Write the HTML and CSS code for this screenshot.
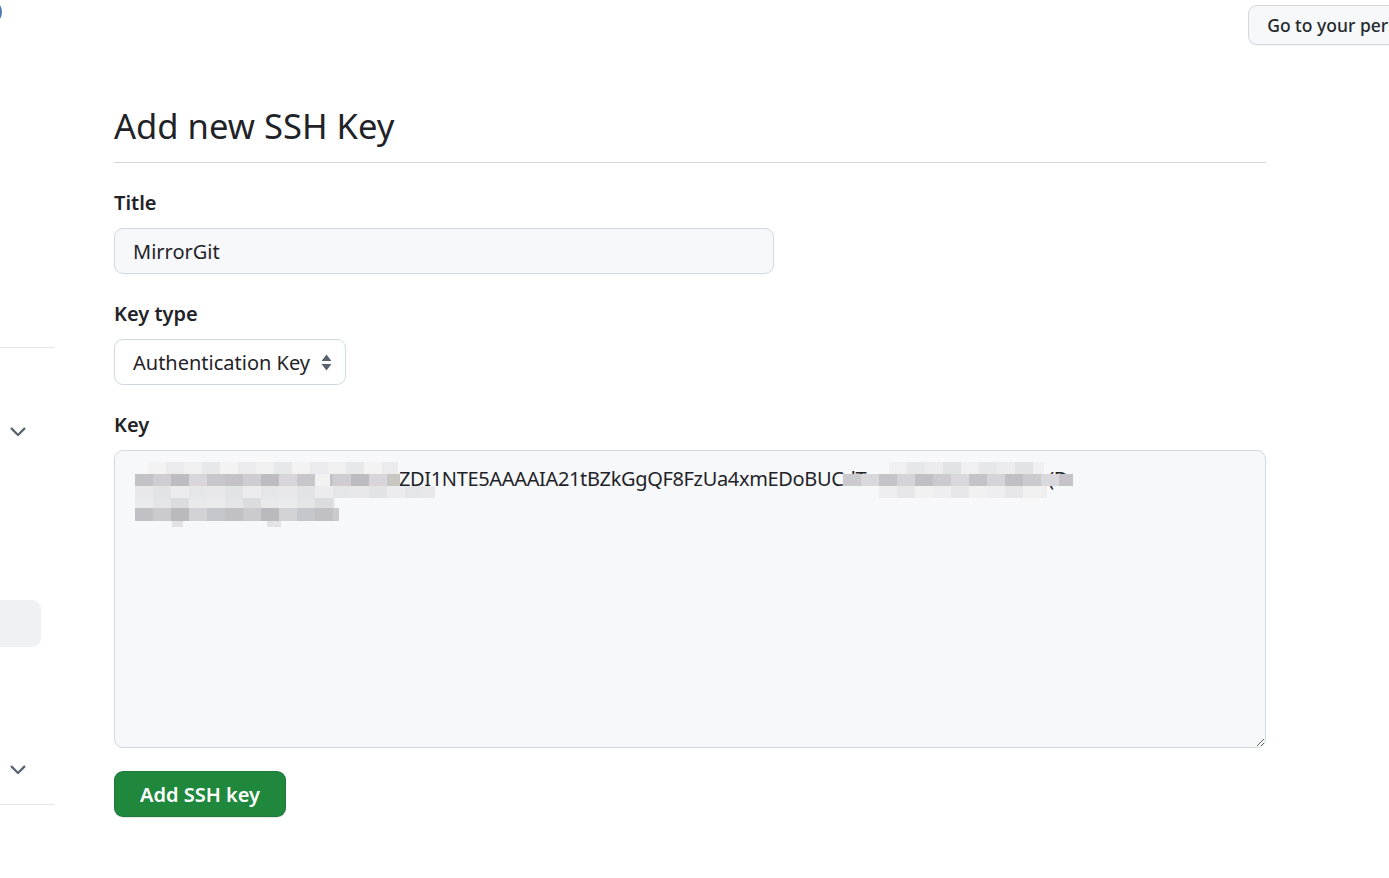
FILE: index.html
```html
<!DOCTYPE html>
<html lang="en">
<head>
<meta charset="utf-8">
<title>Add new SSH Key</title>
<link rel="stylesheet" href="styles.css">
</head>
<body>
<div class="page">
  <aside class="sidebar">
    <div class="avatar-row"><span class="avatar"></span></div>
    <div class="side-rule side-rule-1"></div>
    <div class="nav-row nav-row-1">
      <svg class="chev" viewBox="0 0 16 16" width="24" height="24"><path d="M12.78 5.22a.749.749 0 0 1 0 1.060l-4.25 4.25a.749.749 0 0 1-1.06 0L3.22 6.28a.749.749 0 1 1 1.06-1.06L8 8.939l3.72-3.719a.749.749 0 0 1 1.06 0Z"/></svg>
    </div>
    <div class="nav-selected"></div>
    <div class="nav-row nav-row-2">
      <svg class="chev" viewBox="0 0 16 16" width="24" height="24"><path d="M12.78 5.22a.749.749 0 0 1 0 1.060l-4.25 4.25a.749.749 0 0 1-1.06 0L3.22 6.28a.749.749 0 1 1 1.06-1.06L8 8.939l3.72-3.719a.749.749 0 0 1 1.06 0Z"/></svg>
    </div>
    <div class="side-rule side-rule-2"></div>
  </aside>

  <div class="content">
    <header class="topbar">
      <button class="btn-profile">Go to your personal profile</button>
    </header>

    <main class="main">
      <h1 class="subhead">Add new SSH Key</h1>

      <form class="form">
        <div class="group">
          <label class="label" for="title">Title</label>
          <input class="input" id="title" type="text" value="MirrorGit">
        </div>

        <div class="group">
          <label class="label">Key type</label>
          <div class="select">
            <span>Authentication Key</span>
            <svg class="select-arrow" viewBox="0 0 11 17" width="11" height="17"><path d="M5.5 0.5L10.5 7H0.5Z M5.5 16.5L10.5 10H0.5Z"/></svg>
          </div>
        </div>

        <div class="group">
          <label class="label">Key</label>
          <div class="textarea">
            <div class="key-line"><span class="gap gap-a"></span>ZDI1NTE5AAAAIA21tBZkGgQF8FzUa4xmEDoBUCdT<span class="gap gap-b"></span>(D</div>
            <div class="key-line"><span class="gap gap-c"></span></div>
            <div class="mosaic mosaic-a">
              <div class="mr mr-a0"></div>
              <div class="mr mr-a1"></div>
              <div class="mr mr-a2"></div>
              <div class="mr mr-a3"></div>
              <div class="mr mr-a4"></div>
              <div class="mr mr-a5"></div>
            </div>
            <div class="mosaic mosaic-b">
              <div class="mr mr-b0"></div>
              <div class="mr mr-b1"></div>
              <div class="mr mr-b2"></div>
            </div>
          </div>
        </div>

        <button class="btn-primary" type="button">Add SSH key</button>
      </form>
    </main>
  </div>
</div>
</body>
</html>
```

FILE: styles.css
```css
* { box-sizing: border-box; }

html, body {
  margin: 0;
  padding: 0;
  background: #ffffff;
  overflow: hidden;
  height: 100%;
}

body {
  font-family: "Noto Sans", "Liberation Sans", sans-serif;
  color: #1f2328;
}

.page {
  display: flex;
  width: 1389px;
  height: 878px;
  overflow: hidden;
}

/* ---------- sidebar ---------- */
.sidebar {
  width: 54px;
  flex: none;
  display: flex;
  flex-direction: column;
}

.avatar-row {
  height: 24px;
  overflow: hidden;
}

.avatar {
  display: block;
  width: 26px;
  height: 26px;
  margin-left: -24px;
  margin-top: -1px;
  border-radius: 50%;
  border: 2px solid #4f79b0;
}

.side-rule {
  height: 1px;
  background: #e1e4e8;
}

.side-rule-1 { margin-top: 323px; }
.side-rule-2 { margin-top: 10px; }

.nav-row {
  height: 48px;
  display: flex;
  align-items: center;
  padding-left: 6px;
}

.nav-row-1 { margin-top: 60px; }
.nav-row-2 { margin-top: 99px; }

.chev { fill: #59636e; }

.nav-selected {
  margin-top: 144px;
  width: 41px;
  height: 47px;
  border-radius: 0 9px 9px 0;
  background: #eff1f3;
}

/* ---------- content ---------- */
.content {
  flex: 1;
  display: flex;
  flex-direction: column;
  min-width: 0;
}

.topbar {
  height: 49px;
  display: flex;
  justify-content: flex-end;
  align-items: flex-start;
}

.btn-profile {
  margin-top: 5px;
  margin-right: -122px;
  height: 40px;
  padding: 0 18px;
  border: 1px solid #d1d9e0;
  border-radius: 9px;
  background: #f6f8fa;
  font-family: "Noto Sans", "Liberation Sans", sans-serif;
  font-size: 17.5px;
  font-weight: 500;
  color: #25292e;
  white-space: nowrap;
  box-shadow: 0 1px 0 rgba(31, 35, 40, 0.04);
}

.main {
  margin-left: 60px;
  width: 1152px;
}

.subhead {
  margin: 51px 0 0;
  padding-bottom: 11px;
  border-bottom: 1px solid #d1d9e0;
  font-size: 34.6px;
  line-height: 51px;
  font-weight: 400;
  color: #1f2328;
}

.form {
  display: flex;
  flex-direction: column;
  align-items: flex-start;
  padding-top: 25px;
}

.group {
  display: flex;
  flex-direction: column;
  align-items: flex-start;
  width: 100%;
  margin-bottom: 25px;
}

.group:last-of-type { margin-bottom: 23px; }

.label {
  display: block;
  font-size: 20px;
  line-height: 30px;
  font-weight: 600;
  margin-bottom: 10px;
  color: #1f2328;
}

.input {
  width: 660px;
  height: 46px;
  padding: 0 18px;
  border: 1px solid #d1d9e0;
  border-radius: 9px;
  background: #f6f8fa;
  font-family: "Noto Sans", "Liberation Sans", sans-serif;
  font-size: 20px;
  color: #1f2328;
  outline: none;
}

.select {
  width: 232px;
  height: 46px;
  padding: 0 13px 0 18px;
  border: 1px solid #d1d9e0;
  border-radius: 9px;
  background: #ffffff;
  display: flex;
  align-items: center;
  justify-content: space-between;
  font-size: 20px;
  color: #1f2328;
}

.select-arrow { fill: #59636e; }

.textarea {
  position: relative;
  width: 1152px;
  height: 298px;
  padding: 12px 19px;
  border: 1px solid #d1d9e0;
  border-radius: 9px;
  background: #f6f8fa;
  font-size: 20px;
  line-height: 32px;
  color: #1f2328;
  resize: vertical;
  overflow: hidden;
  white-space: nowrap;
}

.key-line {
  height: 32px;
  letter-spacing: -0.35px;
}

.gap { display: inline-block; height: 10px; }
.gap-a { width: 265px; }
.gap-b { width: 182px; }
.gap-c { width: 204px; }

/* redaction mosaic laid over the key text */
.mosaic {
  position: absolute;
  display: flex;
  flex-direction: column;
}

.mosaic-a { left: 20px; top: 11px; width: 300px; }
.mosaic-b { left: 728px; top: 11px; width: 232px; }

.mr { height: 12px; }

.mr-a0 {
  margin-left: 13px;
  width: 250px;
  background: repeating-linear-gradient(90deg, #f3f3f4 0 18px, #ebebed 18px 36px, #f0f0f1 36px 54px, #e7e8ea 54px 72px);
}
.mr-a1 {
  width: 265px;
  background:
    linear-gradient(90deg, transparent 0 180px, #f2f2f3 180px 195px, transparent 195px 253px, #c9c7c1 253px 265px),
    repeating-linear-gradient(90deg, #c3c2c7 0 18px, #cfcdd1 18px 36px, #bdbcc1 36px 54px, #d8d6da 54px 72px, #c7c6cb 72px 90px);
}
.mr-a2 {
  width: 300px;
  background: repeating-linear-gradient(90deg, #e8e8ea 0 18px, #e2e3e5 18px 36px, #ececee 36px 54px, #e5e6e8 54px 72px);
}
.mr-a3 {
  width: 200px;
  height: 10px;
  background: repeating-linear-gradient(90deg, #eaebed 0 18px, #e3e5e7 18px 36px, #dadcdf 36px 54px, #e8e9eb 54px 72px);
}
.mr-a4 {
  width: 204px;
  height: 13px;
  background: repeating-linear-gradient(90deg, #c1c0c5 0 18px, #cbcacf 18px 36px, #b9b9be 36px 54px, #d2d1d5 54px 72px, #c6c7cc 72px 90px);
}
.mr-a5 {
  width: 150px;
  height: 6px;
  background: linear-gradient(90deg, transparent 0 37px, #e2e2e4 37px 48px, transparent 48px 132px, #e3e3e5 132px 146px, transparent 146px);
}

.mr-b0 {
  margin-left: 46px;
  width: 155px;
  background: repeating-linear-gradient(90deg, #f0f0f2 0 18px, #e6e7e9 18px 36px, #ececee 36px 54px, #e2e3e5 54px 72px);
}
.mr-b1 {
  width: 230px;
  background: repeating-linear-gradient(90deg, #cbcacf 0 18px, #d9d8dc 18px 36px, #c4c3c8 36px 54px, #d4d3d7 54px 72px, #bfbfc4 72px 90px);
}
.mr-b2 {
  margin-left: 36px;
  width: 168px;
  background: repeating-linear-gradient(90deg, #eeeef0 0 18px, #e7e7e9 18px 36px, #f1f1f2 36px 54px);
}

.btn-primary {
  height: 46px;
  padding: 0 25px;
  border: 1px solid rgba(31, 35, 40, 0.15);
  border-radius: 9px;
  background: #1f883d;
  color: #ffffff;
  font-family: "Noto Sans", "Liberation Sans", sans-serif;
  font-size: 20px;
  font-weight: 600;
  box-shadow: 0 1px 0 rgba(31, 35, 40, 0.1);
}
```
